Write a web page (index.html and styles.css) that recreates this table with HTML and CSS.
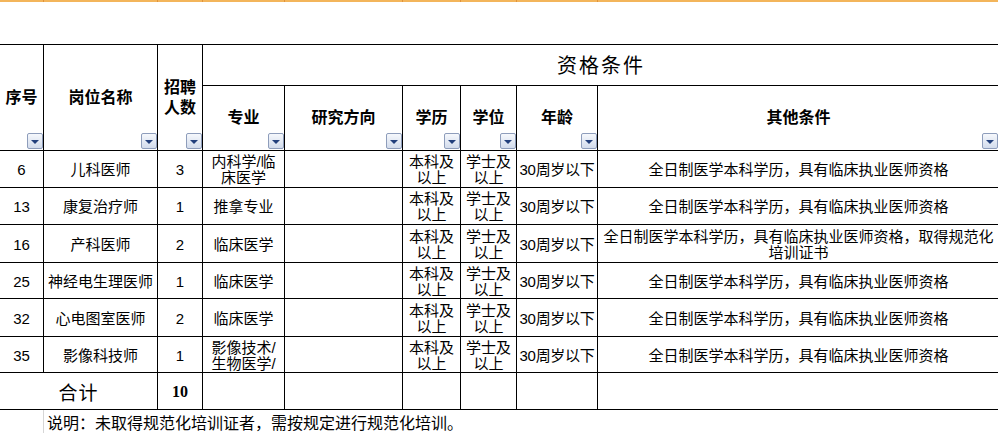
FILE: index.html
```html
<!DOCTYPE html>
<html lang="zh">
<head>
<meta charset="utf-8">
<title>招聘岗位表</title>
<link rel="stylesheet" href="styles.css">
</head>
<body>
<div class="topbar">
  <span class="t w0"></span><span class="t w1"></span><span class="t w2"></span><span class="t w3"></span><span class="t w4"></span><span class="t w5"></span><span class="t w6"></span><span class="t w7"></span><span class="t-rest"></span>
</div>
<div class="spacer"></div>
<div class="sheet">
  <div class="c h r2">序号<i class="dd"></i></div>
  <div class="c h r2">岗位名称<i class="dd"></i></div>
  <div class="c h r2">招聘<br>人数<i class="dd"></i></div>
  <div class="c title s6">资格条件</div>
  <div class="c h">专业<i class="dd"></i></div>
  <div class="c h">研究方向<i class="dd"></i></div>
  <div class="c h">学历<i class="dd"></i></div>
  <div class="c h">学位<i class="dd"></i></div>
  <div class="c h">年龄<i class="dd"></i></div>
  <div class="c h">其他条件<i class="dd dd-last"></i></div>

  <div class="c">6</div><div class="c">儿科医师</div><div class="c">3</div><div class="c">内科学/临床医学</div><div class="c"></div><div class="c">本科及以上</div><div class="c">学士及以上</div><div class="c age">30周岁以下</div><div class="c">全日制医学本科学历，具有临床执业医师资格</div>

  <div class="c">13</div><div class="c">康复治疗师</div><div class="c">1</div><div class="c">推拿专业</div><div class="c"></div><div class="c">本科及以上</div><div class="c">学士及以上</div><div class="c age">30周岁以下</div><div class="c">全日制医学本科学历，具有临床执业医师资格</div>

  <div class="c">16</div><div class="c">产科医师</div><div class="c">2</div><div class="c">临床医学</div><div class="c"></div><div class="c">本科及以上</div><div class="c">学士及以上</div><div class="c age">30周岁以下</div><div class="c">全日制医学本科学历，具有临床执业医师资格，取得规范化培训证书</div>

  <div class="c">25</div><div class="c">神经电生理医师</div><div class="c">1</div><div class="c">临床医学</div><div class="c"></div><div class="c">本科及以上</div><div class="c">学士及以上</div><div class="c age">30周岁以下</div><div class="c">全日制医学本科学历，具有临床执业医师资格</div>

  <div class="c">32</div><div class="c">心电图室医师</div><div class="c">2</div><div class="c">临床医学</div><div class="c"></div><div class="c">本科及以上</div><div class="c">学士及以上</div><div class="c age">30周岁以下</div><div class="c">全日制医学本科学历，具有临床执业医师资格</div>

  <div class="c">35</div><div class="c">影像科技师</div><div class="c">1</div><div class="c">影像技术/生物医学/</div><div class="c"></div><div class="c">本科及以上</div><div class="c">学士及以上</div><div class="c age">30周岁以下</div><div class="c">全日制医学本科学历，具有临床执业医师资格</div>

  <div class="c total s2">合计</div><div class="c num">10</div><div class="c"></div><div class="c"></div><div class="c"></div><div class="c"></div><div class="c"></div><div class="c"></div>
</div>
<div class="note">说明：未取得规范化培训证者，需按规定进行规范化培训。</div>
</body>
</html>
```
FILE: styles.css
```css
html, body {
  margin: 0;
  padding: 0;
  background: #fff;
}
body {
  width: 998px;
  height: 433px;
  overflow: hidden;
  font-family: "Liberation Sans", "Noto Sans CJK SC", sans-serif;
  color: #000;
}
.topbar {
  display: flex;
  height: 2px;
  background: #f3b55b;
}
.t {
  flex: none;
  border-right: 1px solid #e0923a;
}
.w0 { width: 43px; }
.w1 { width: 113px; }
.w2 { width: 44px; }
.w3 { width: 81px; }
.w4 { width: 117px; }
.w5 { width: 57px; }
.w6 { width: 55px; }
.w7 { width: 80px; }
.t-rest { flex: 1; }
.spacer { height: 42px; }

.sheet {
  display: grid;
  grid-template-columns: 43px 113px 44px 81px 117px 57px 55px 80px 401px;
  grid-template-rows: 40px 64px 36px 36px 37px 35px 37px 35px 36px;
  gap: 1px;
  background: #000;
  border-top: 1px solid #000;
  border-bottom: 1px solid #000;
  width: max-content;
}
.c {
  background: #fff;
  display: flex;
  align-items: center;
  justify-content: center;
  text-align: center;
  font-size: 15px;
  line-height: 16px;
  padding: 2px 2px 0;
  position: relative;
  overflow: hidden;
  box-sizing: border-box;
}
.age {
  white-space: nowrap;
  padding: 2px 0 0;
  font-size: 15px;
  letter-spacing: -0.3px;
}
.h {
  font-weight: bold;
  font-size: 16px;
  line-height: 20px;
  padding: 0;
}
.r2 { grid-row: span 2; }
.s6 { grid-column: span 6; }
.s2 { grid-column: span 2; }
.title {
  font-size: 20px;
  letter-spacing: 2px;
  font-family: "Noto Sans CJK SC", sans-serif;
  padding: 0;
}
.total {
  font-size: 19px;
  letter-spacing: 1px;
  font-family: "Noto Sans CJK SC", sans-serif;
}
.num {
  font-family: "Liberation Serif", serif;
  font-weight: bold;
  font-size: 16px;
}
.dd {
  position: absolute;
  right: 0;
  bottom: 1px;
  width: 16px;
  height: 16px;
  box-sizing: border-box;
  border: 1px solid #8e9dbb;
  border-radius: 2px;
  background: linear-gradient(#f6f8fc, #d3dcec);
  display: flex;
  align-items: center;
  justify-content: center;
}
.dd::after {
  content: "";
  margin-top: 2px;
  border-left: 4px solid transparent;
  border-right: 4px solid transparent;
  border-top: 4px solid #23407c;
}
.dd-last { right: 1px; }

.note {
  margin-left: 43px;
  border-left: 1px solid #d6d6d6;
  height: 23px;
  padding: 3px 0 0 3px;
  box-sizing: border-box;
  font-size: 16px;
  line-height: 19px;
  font-family: "Noto Sans CJK SC", sans-serif;
}
```
